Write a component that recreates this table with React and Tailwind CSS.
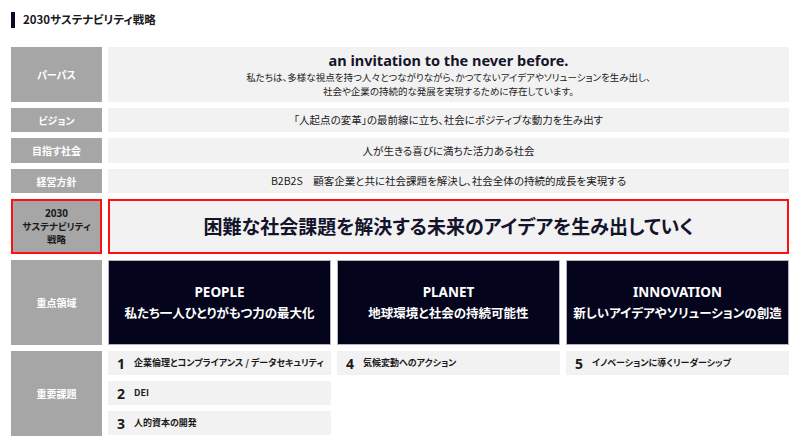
const jp = "font-['Noto_Sans_CJK_JP',sans-serif] [font-feature-settings:'palt']";

function Label({ children, className = "" }) {
  return (
    <div className={`flex items-center justify-center bg-[#a6a6a6] text-white font-bold text-[10px] text-center ${className}`}>
      {children}
    </div>
  );
}

function Row({ children, className = "" }) {
  return (
    <div className={`flex items-center justify-center bg-[#f2f2f2] text-[#1a1a1a] text-center ${className}`}>
      {children}
    </div>
  );
}

function Area({ en, ja }) {
  return (
    <div className="flex flex-col items-center justify-center bg-[#04041c] border border-[#b4b4c0] text-white">
      <div className="font-['Noto_Sans',sans-serif] font-bold text-[13.5px] leading-[20px]">{en}</div>
      <div className="font-bold text-[12.5px] leading-[20px] mt-[1px]">{ja}</div>
    </div>
  );
}

function Issue({ no, text }) {
  return (
    <div className="flex items-center h-6 bg-[#f2f2f2] pl-[9px] text-[#1a1a1a]">
      <span className="font-['Noto_Sans',sans-serif] font-bold text-[14px] w-4">{no}</span>
      <span className="font-bold text-[9px] ml-[1px]">{text}</span>
    </div>
  );
}

export default function App() {
  return (
    <div className={`w-[800px] h-[444px] bg-white pl-[11px] pt-3 ${jp}`}>
      <div className="flex items-center h-4">
        <div className="w-1 h-4 bg-[#0a0a23]" />
        <div className="ml-2 text-[11.5px] font-bold text-[#1a1a1a]">2030サステナビリティ戦略</div>
      </div>

      <div className="grid grid-cols-[91px_681px] gap-x-1.5 gap-y-1.5 mt-[19px] [grid-template-rows:55px_24px_25px_24px_55px_85px_85px]">
        <Label>パーパス</Label>
        <Row className="flex-col">
          <div className="font-['Noto_Sans',sans-serif] font-bold text-[14.5px] leading-[18px] text-[#14142b]">an invitation to the never before.</div>
          <div className="text-[9.5px] leading-[14px] mt-[1px]">私たちは、多様な視点を持つ人々とつながりながら、かつてないアイデアやソリューションを生み出し、</div>
          <div className="text-[9.5px] leading-[14px]">社会や企業の持続的な発展を実現するために存在しています。</div>
        </Row>

        <Label>ビジョン</Label>
        <Row className="text-[10.5px]">「人起点の変革」の最前線に立ち、社会にポジティブな動力を生み出す</Row>

        <Label>目指す社会</Label>
        <Row className="text-[10.5px]">人が生きる喜びに満ちた活力ある社会</Row>

        <Label>経営方針</Label>
        <Row className="text-[10.5px]">B2B2S　顧客企業と共に社会課題を解決し、社会全体の持続的成長を実現する</Row>

        <div className="flex flex-col items-center justify-center bg-[#a6a6a6] border-2 border-[#ff1010] text-[#1a1a1a] font-bold text-[9.5px] leading-[13px] text-center">
          <div className="font-['Noto_Sans',sans-serif] text-[10px]">2030</div>
          <div>サステナビリティ</div>
          <div>戦略</div>
        </div>
        <div className="flex items-center justify-center bg-[#f2f2f2] border-2 border-[#ff1010]">
          <div className="font-bold text-[19px] text-[#14142b]">困難な社会課題を解決する未来のアイデアを生み出していく</div>
        </div>

        <Label>重点領域</Label>
        <div className="grid grid-cols-3 gap-1.5">
          <Area en="PEOPLE" ja="私たち一人ひとりがもつ力の最大化" />
          <Area en="PLANET" ja="地球環境と社会の持続可能性" />
          <Area en="INNOVATION" ja="新しいアイデアやソリューションの創造" />
        </div>

        <Label>重要課題</Label>
        <div className="grid grid-cols-3 gap-1.5 items-start">
          <div className="flex flex-col gap-1.5">
            <Issue no="1" text="企業倫理とコンプライアンス / データセキュリティ" />
            <Issue no="2" text="DEI" />
            <Issue no="3" text="人的資本の開発" />
          </div>
          <Issue no="4" text="気候変動へのアクション" />
          <Issue no="5" text="イノベーションに導くリーダーシップ" />
        </div>
      </div>
    </div>
  );
}
